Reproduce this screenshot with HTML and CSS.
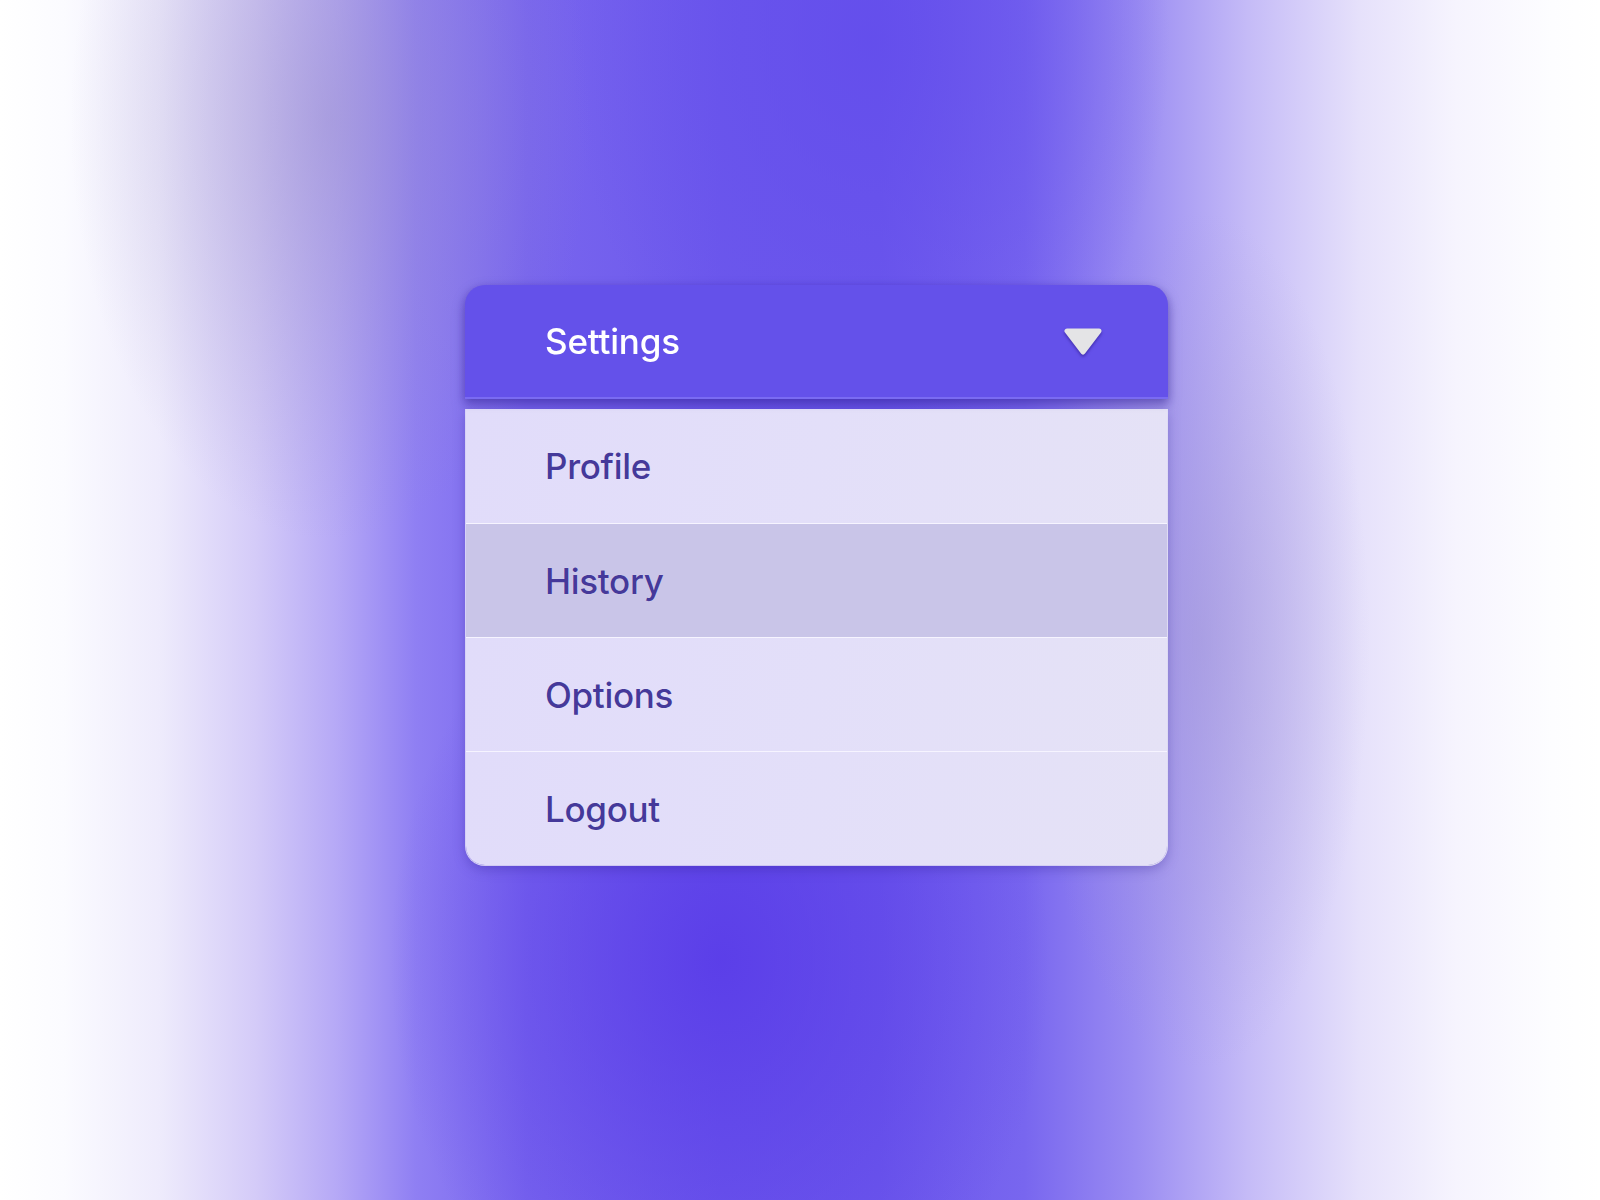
FILE: index.html
```html
<!DOCTYPE html>
<html lang="en">
<head>
<meta charset="utf-8">
<title>Settings menu</title>
<link rel="stylesheet" href="styles.css">
</head>
<body>
<main class="stage">
  <section class="menu">
    <header class="menu-head">
      <span class="menu-title">Settings</span>
      <svg class="caret" width="40" height="28" viewBox="0 0 40 28" aria-hidden="true">
        <path d="M4 3 L36 3 L20 24 Z" fill="#e4e4e6" stroke="#e4e4e6" stroke-width="5" stroke-linejoin="round"/>
      </svg>
    </header>
    <ul class="menu-list">
      <li class="menu-item">Profile</li>
      <li class="menu-item is-active">History</li>
      <li class="menu-item">Options</li>
      <li class="menu-item">Logout</li>
    </ul>
  </section>
</main>
</body>
</html>
```
FILE: styles.css
```css
* { box-sizing: border-box; }

html, body {
  margin: 0;
  padding: 0;
}

body {
  width: 1600px;
  height: 1200px;
  overflow: hidden;
  font-family: "Inter", "Noto Sans", "Liberation Sans", sans-serif;
}

.stage {
  width: 1600px;
  height: 1200px;
  display: flex;
  align-items: flex-start;
  padding: 285px 0 0 465px;
  background:
    radial-gradient(ellipse 330px 420px at 720px 960px, rgba(88, 58, 232, 0.85), rgba(88, 58, 232, 0) 100%),
    radial-gradient(ellipse 300px 420px at 870px 40px, rgba(98, 76, 236, 0.8), rgba(98, 76, 236, 0) 100%),
    radial-gradient(ellipse 260px 420px at 330px 120px, rgba(150, 140, 196, 0.45), rgba(150, 140, 196, 0) 100%),
    radial-gradient(ellipse 170px 430px at 1200px 640px, rgba(160, 150, 210, 0.5), rgba(160, 150, 210, 0) 100%),
    linear-gradient(90deg,
      #ffffff 0%,
      #fbfbff 4%,
      #eeebfc 10%,
      #d4cbf8 16%,
      #b6a9f6 21%,
      #8f7ff3 26%,
      #7865ee 33%,
      #6d59ec 45%,
      #6c58ec 55%,
      #7866ef 64%,
      #9a8cf2 71%,
      #c5bbf7 78%,
      #e6e1fb 85%,
      #f6f4fe 91%,
      #fdfdff 97%,
      #ffffff 100%);
}

.menu {
  width: 703px;
  display: flex;
  flex-direction: column;
  border-radius: 20px;
  filter: drop-shadow(0 4px 6px rgba(40, 22, 130, 0.28));
}

.menu-head {
  height: 114px;
  display: flex;
  align-items: center;
  justify-content: space-between;
  padding: 0 65px 0 80px;
  background: #6451ea;
  border-radius: 20px 20px 0 0;
  border-bottom: 2px solid #7a6bf2;
  box-shadow: 0 4px 8px rgba(40, 22, 140, 0.35);
  position: relative;
  z-index: 1;
}

.menu-title {
  color: #ffffff;
  font-size: 35px;
  font-weight: 500;
  letter-spacing: -0.2px;
}

.caret {
  display: block;
  margin-top: 2px;
  filter: drop-shadow(0 2px 1.5px rgba(40, 20, 130, 0.55));
}

.menu-list {
  list-style: none;
  margin: 10px 0 0;
  padding: 0;
  border-radius: 0 0 20px 20px;
  overflow: hidden;
  border: 1px solid rgba(255, 255, 255, 0.7);
  border-top: none;
}

.menu-item {
  height: 114px;
  display: flex;
  align-items: center;
  padding-left: 79px;
  color: #45399a;
  font-size: 35px;
  font-weight: 500;
  letter-spacing: -0.3px;
  text-shadow: 0 0 1px rgba(255, 255, 255, 0.6);
  background: linear-gradient(100deg, #e1dcfa 0%, #e3dff9 50%, #e5e2f6 100%);
}

.menu-item + .menu-item {
  border-top: 1px solid #f6f4ff;
}

.menu-item.is-active {
  background: #c9c5e8;
}
```
